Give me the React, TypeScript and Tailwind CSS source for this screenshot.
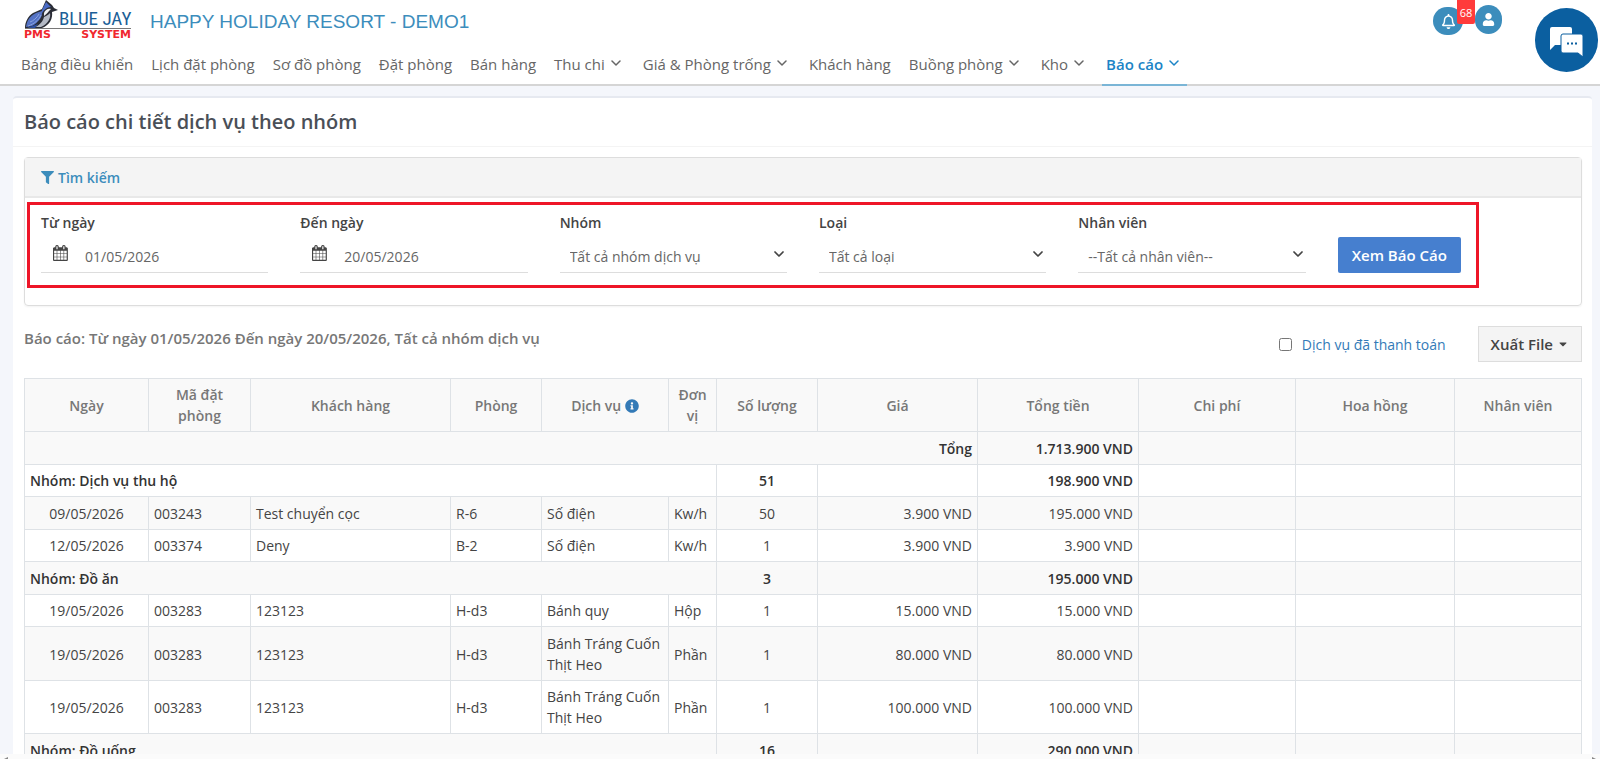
import { useState } from 'react';
import type { ReactNode } from 'react';
import { FaCaretDown, FaFilter, FaInfoCircle, FaRegBell, FaUser } from 'react-icons/fa';

interface MenuItem {
  label: string;
  dropdown?: boolean;
  active?: boolean;
}

interface GroupRow {
  group: string;
  qty: number;
  total: string;
}

interface ItemRow {
  date: string;
  code: string;
  customer: string;
  room: string;
  service: string;
  unit: string;
  qty: number;
  price: string;
  total: string;
}

const menu: MenuItem[] = [
  { label: 'Bảng điều khiển' },
  { label: 'Lịch đặt phòng' },
  { label: 'Sơ đồ phòng' },
  { label: 'Đặt phòng' },
  { label: 'Bán hàng' },
  { label: 'Thu chi', dropdown: true },
  { label: 'Giá & Phòng trống', dropdown: true },
  { label: 'Khách hàng' },
  { label: 'Buồng phòng', dropdown: true },
  { label: 'Kho', dropdown: true },
  { label: 'Báo cáo', dropdown: true, active: true },
];

const rows: (GroupRow | ItemRow)[] = [
  { group: 'Dịch vụ thu hộ', qty: 51, total: '198.900 VND' },
  { date: '09/05/2026', code: '003243', customer: 'Test chuyển cọc', room: 'R-6', service: 'Số điện', unit: 'Kw/h', qty: 50, price: '3.900 VND', total: '195.000 VND' },
  { date: '12/05/2026', code: '003374', customer: 'Deny', room: 'B-2', service: 'Số điện', unit: 'Kw/h', qty: 1, price: '3.900 VND', total: '3.900 VND' },
  { group: 'Đồ ăn', qty: 3, total: '195.000 VND' },
  { date: '19/05/2026', code: '003283', customer: '123123', room: 'H-d3', service: 'Bánh quy', unit: 'Hộp', qty: 1, price: '15.000 VND', total: '15.000 VND' },
  { date: '19/05/2026', code: '003283', customer: '123123', room: 'H-d3', service: 'Bánh Tráng Cuốn Thịt Heo', unit: 'Phần', qty: 1, price: '80.000 VND', total: '80.000 VND' },
  { date: '19/05/2026', code: '003283', customer: '123123', room: 'H-d3', service: 'Bánh Tráng Cuốn Thịt Heo', unit: 'Phần', qty: 1, price: '100.000 VND', total: '100.000 VND' },
  { group: 'Đồ uống', qty: 16, total: '290.000 VND' },
];

function Chevron({ className }: { className: string }) {
  return (
    <svg viewBox="0 0 10 6" className={className} fill="none" stroke="currentColor" strokeLinecap="round" strokeLinejoin="round">
      <path d="M1 1l4 4 4-4" />
    </svg>
  );
}

function CalendarIcon() {
  return (
    <svg viewBox="0 0 1792 1792" className="h-4 w-4" fill="currentColor">
      <path d="M128 1664h288v-288h-288v288zm352 0h320v-288h-320v288zm-352-352h288v-320h-288v320zm352 0h320v-320h-320v320zm-352-384h288v-288h-288v288zm736 736h320v-288h-320v288zm-384-736h320v-288h-320v288zm768 736h288v-288h-288v288zm-384-352h320v-320h-320v320zm-352-864v-288q0-13-9.5-22.5t-22.5-9.5h-64q-13 0-22.5 9.5t-9.5 22.5v288q0 13 9.5 22.5t22.5 9.5h64q13 0 22.5-9.5t9.5-22.5zm736 864h288v-320h-288v320zm-384-384h320v-288h-320v288zm384 0h288v-288h-288v288zm32-480v-288q0-13-9.5-22.5t-22.5-9.5h-64q-13 0-22.5 9.5t-9.5 22.5v288q0 13 9.5 22.5t22.5 9.5h64q13 0 22.5-9.5t9.5-22.5zm384-64v1280q0 52-38 90t-90 38h-1408q-52 0-90-38t-38-90v-1280q0-52 38-90t90-38h128v-96q0-66 47-113t113-47h64q66 0 113 47t47 113v96h384v-96q0-66 47-113t113-47h64q66 0 113 47t47 113v96h128q52 0 90 38t38 90z" />
    </svg>
  );
}

function Logo() {
  return (
    <svg viewBox="0 0 108 40" className="h-10 w-[108px]" role="img" aria-label="Blue Jay PMS System">
      {/* bird */}
      <path d="M1 28C1 22 4 16 9 13L18 9L22 0L28 5L30 8L34 10L28 12C29 18 26 25 18 28Z" fill="#2a2d36" />
      <path d="M2 27C3 20 6 16 12 13L18 11C19 16 15 22 8 26Z" fill="#5472c4" />
      <path d="M6 22C9 21 13 18 15 14M4 26C10 24 15 20 17 15" stroke="#8ba3e0" strokeWidth="1" fill="none" />
      <path d="M18 10L22 2L27 7C23 7 20 10 18 13Z" fill="#4a6bc6" />
      <path d="M20 13C21 10 24 8 27 9L25 11C24 13 22 14 20 16Z" fill="#f0f2f5" />
      <path d="M20 17C23 16 25 14 26 13C27 18 24 24 17 27H11C16 25 19 21 20 17Z" fill="#b4bac6" />
      <path d="M3 28L14 24L11 28Z" fill="#2b4da0" />
      <path d="M1 28.500H107" stroke="#777" strokeWidth="1" />
      <text x="35" y="25" fontSize="19" fontFamily="'Liberation Sans Narrow', 'Roboto Condensed', 'Liberation Sans', sans-serif" fill="#1c5f97">BLUE JAY</text>
      <text x="0" y="38" fontSize="11" fontWeight="700" fontFamily="'DejaVu Sans', sans-serif" fill="#f0282e">PMS</text>
      <text x="107" y="38" textAnchor="end" fontSize="11" fontWeight="700" fontFamily="'DejaVu Sans', sans-serif" fill="#f0282e">SYSTEM</text>
    </svg>
  );
}

function Field({ id, label, children }: { id: string; label: string; children: ReactNode }) {
  return (
    <div className="px-4">
      <label htmlFor={id} className="block font-semibold leading-5 text-[#444]">{label}</label>
      <div className="mt-1 flex h-9 items-center border-b border-[#ddd]">{children}</div>
    </div>
  );
}

function DateField({ id, label, value }: { id: string; label: string; value: string }) {
  return (
    <Field id={id} label={label}>
      <span className="ml-3 mr-4 pb-1 text-[#444]"><CalendarIcon /></span>
      <input id={id} defaultValue={value} className="w-full min-w-0 bg-transparent pt-1 text-[#666] outline-none" />
    </Field>
  );
}

function SelectField({ id, label, value }: { id: string; label: string; value: string }) {
  return (
    <Field id={id} label={label}>
      <div className="relative w-full">
        <select id={id} className="w-full appearance-none bg-transparent pl-[10px] pt-1 text-[#666] outline-none">
          <option>{value}</option>
        </select>
        <Chevron className="pointer-events-none absolute right-[3px] top-[9px] h-[6px] w-[10px] stroke-[1.75] text-[#444]" />
      </div>
    </Field>
  );
}

const cell = 'border border-[#dee2e6] px-[5px]';

export default function App() {
  const [paid, setPaid] = useState(false);

  return (
    <div className="h-screen overflow-hidden bg-[#f4f6fb] font-['Open_Sans','Noto_Sans',sans-serif] text-sm leading-[21px] text-[#444]">
      <header className="border-b-2 border-[#d5d5d5] bg-white">
        <div className="flex h-[43px] items-start pl-6">
          <a href="#"><Logo /></a>
          <a href="#" className="ml-[18px] mt-[10px] font-['Liberation_Sans',sans-serif] text-[19px] leading-6 text-[#3c8dbc]">HAPPY HOLIDAY RESORT - DEMO1</a>
          <div className="relative ml-auto mr-[98px] flex gap-3 pt-[5px]">
            <button aria-label="Thông báo" className="mt-[2px] flex h-7 w-[30px] items-center justify-center rounded-full bg-[#3c8dbc] text-[15px] text-white"><FaRegBell /></button>
            <button aria-label="Tài khoản" className="flex h-[29px] w-[27px] items-center justify-center rounded-full bg-[#3c8dbc] text-[13px] text-white"><FaUser /></button>
            <span className="absolute left-6 top-0 flex h-6 w-[18px] items-center justify-center rounded-b-xs bg-[#ff3b3b] text-[11px] text-white">68</span>
          </div>
        </div>
        <nav className="flex gap-[10px] pl-[17px] text-[15px]">
          {menu.map(item => (
            <a
              key={item.label}
              href="#"
              className={`-mb-[2px] flex h-[43px] items-center whitespace-nowrap border-b-2 pl-1 pt-[2px] ${item.dropdown ? 'pr-2' : 'pr-1'} ${item.active ? 'border-[#7ab5d6] font-semibold text-[#1c84c6]' : 'border-transparent text-[#666]'}`}
            >
              {item.label}
              {item.dropdown && <Chevron className="mb-1 ml-[6px] h-[6px] w-[10px] stroke-[1.5]" />}
            </a>
          ))}
        </nav>
      </header>

      <main className="ml-[13px] mr-2 mt-[10px] rounded-t border-t-2 border-[#e6e9f0] bg-white">
        <h1 className="border-b border-[#f4f4f4] px-[11px] py-3 text-xl font-semibold leading-6 text-[#4a4f57]">Báo cáo chi tiết dịch vụ theo nhóm</h1>

        <div className="px-[10px] pl-[11px] pt-[10px]">
          <section className="rounded border border-[#ddd] shadow-xs">
            <div className="border-b-2 border-[#e8e8e8] bg-[#f4f4f4] px-4 pb-2 pt-[9px]">
              <a href="#" className="flex items-center gap-1 font-semibold text-[#3c8dbc]"><FaFilter className="text-[13px]" /> Tìm kiếm</a>
            </div>
            <form className="relative grid grid-cols-6 pb-8 pt-[15px]" onSubmit={e => e.preventDefault()}>
              <DateField id="from" label="Từ ngày" value="01/05/2026" />
              <DateField id="to" label="Đến ngày" value="20/05/2026" />
              <SelectField id="group" label="Nhóm" value="Tất cả nhóm dịch vụ" />
              <SelectField id="type" label="Loại" value="Tất cả loại" />
              <SelectField id="staff" label="Nhân viên" value="--Tất cả nhân viên--" />
              <div className="px-4 pt-6">
                <button className="h-9 whitespace-nowrap rounded-xs bg-[#467fcf] px-[14px] text-[15px] font-semibold text-white">Xem Báo Cáo</button>
              </div>
              {/* highlight frame */}
              <div className="pointer-events-none absolute bottom-[17px] left-[2px] right-[102px] top-1 border-3 border-[#ee1528]" />
            </form>
          </section>

          <div className="mt-5 flex items-start">
            <p className="mt-[2px] text-[15px] font-semibold text-[#777]">Báo cáo: Từ ngày 01/05/2026 Đến ngày 20/05/2026, Tất cả nhóm dịch vụ</p>
            <div className="ml-auto flex items-center">
              <input id="paid" type="checkbox" checked={paid} onChange={e => setPaid(e.target.checked)} className="mr-[10px] h-[13px] w-[13px]" />
              <label htmlFor="paid" className="text-[#337ab7]">Dịch vụ đã thanh toán</label>
              <button className="ml-8 flex h-9 items-center gap-1 border border-[#ddd] bg-[#f4f4f4] px-3 text-[15px] font-semibold text-[#444]">
                Xuất File <FaCaretDown className="text-xs" />
              </button>
            </div>
          </div>

          <table className="mt-4 w-full table-fixed border-collapse">
            <colgroup>
              <col className="w-[124px]" />
              <col className="w-[102px]" />
              <col className="w-[200px]" />
              <col className="w-[91px]" />
              <col className="w-[127px]" />
              <col className="w-[48px]" />
              <col className="w-[101px]" />
              <col className="w-[160px]" />
              <col className="w-[161px]" />
              <col className="w-[157px]" />
              <col className="w-[159px]" />
              <col className="w-[127px]" />
            </colgroup>
            <thead className="bg-[#f9f9f9] text-[#777]">
              <tr className="h-[53px]">
                <th className={`${cell} font-semibold`}>Ngày</th>
                <th className={`${cell} font-semibold`}>Mã đặt<br />phòng</th>
                <th className={`${cell} font-semibold`}>Khách hàng</th>
                <th className={`${cell} font-semibold`}>Phòng</th>
                <th className={`${cell} font-semibold`}>Dịch vụ <FaInfoCircle className="inline align-[-2px] text-sm text-[#337ab7]" /></th>
                <th className={`${cell} font-semibold`}>Đơn vị</th>
                <th className={`${cell} font-semibold`}>Số lượng</th>
                <th className={`${cell} font-semibold`}>Giá</th>
                <th className={`${cell} font-semibold`}>Tổng tiền</th>
                <th className={`${cell} font-semibold`}>Chi phí</th>
                <th className={`${cell} font-semibold`}>Hoa hồng</th>
                <th className={`${cell} font-semibold`}>Nhân viên</th>
              </tr>
            </thead>
            <tbody className="[&_td]:py-[5px] [&>tr:nth-child(odd)]:bg-[#f9f9f9] [&>tr:nth-child(odd)>td]:pt-[6px]">
              <tr className="text-right font-semibold text-[#333]">
                <td colSpan={8} className={cell}>Tổng</td>
                <td className={cell}>1.713.900 VND</td>
                <td className={cell} />
                <td className={cell} />
                <td className={cell} />
              </tr>
              {rows.map((row, i) =>
                'group' in row ? (
                  <tr key={i} className="font-semibold text-[#333]">
                    <td colSpan={6} className={cell}>Nhóm: {row.group}</td>
                    <td className={`${cell} text-center`}>{row.qty}</td>
                    <td className={cell} />
                    <td className={`${cell} text-right`}>{row.total}</td>
                    <td className={cell} />
                    <td className={cell} />
                    <td className={cell} />
                  </tr>
                ) : (
                  <tr key={i}>
                    <td className={`${cell} text-center`}>{row.date}</td>
                    <td className={cell}>{row.code}</td>
                    <td className={cell}>{row.customer}</td>
                    <td className={cell}>{row.room}</td>
                    <td className={cell}>{row.service}</td>
                    <td className={cell}>{row.unit}</td>
                    <td className={`${cell} text-center`}>{row.qty}</td>
                    <td className={`${cell} text-right`}>{row.price}</td>
                    <td className={`${cell} text-right`}>{row.total}</td>
                    <td className={cell} />
                    <td className={cell} />
                    <td className={cell} />
                  </tr>
                )
              )}
            </tbody>
          </table>
        </div>
      </main>

      <button aria-label="Chat" className="fixed right-[2px] top-2 flex h-16 w-[63px] items-center justify-center rounded-full bg-[#0b5fa0]">
        <svg viewBox="0 0 34 30" className="mt-1 h-[30px] w-[34px]">
          <path d="M2 0H20Q22 0 22 2V16Q22 18 20 18H5L0 23V2Q0 0 2 0Z" fill="#fff" />
          <path d="M13 7H31Q33 7 33 9V30L28 26H13Q11 26 11 24V9Q11 7 13 7Z" fill="#fff" stroke="#0b5fa0" strokeWidth="1" />
          <path d="M17 15.500h2v2h-2zM21 15.500h2v2h-2zM25 15.500h2v2h-2z" fill="#0b5fa0" />
        </svg>
      </button>

      {/* top edge of the horizontal scrollbar */}
      <div className="fixed inset-x-0 bottom-0 flex h-[5px] items-end justify-between bg-[#fbfbfb] px-1 text-[#888]">
        <svg viewBox="0 0 6 3" className="h-[2px] w-1"><path d="M0 3L6 0V3Z" fill="currentColor" /></svg>
        <svg viewBox="0 0 6 3" className="h-[2px] w-1"><path d="M6 3L0 0V3Z" fill="currentColor" /></svg>
      </div>
    </div>
  );
}
